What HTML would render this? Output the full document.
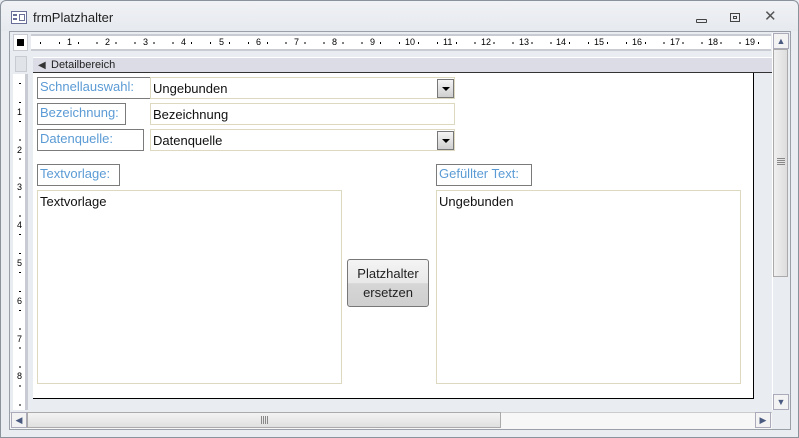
<!DOCTYPE html>
<html><head><meta charset="utf-8"><style>
*{margin:0;padding:0;box-sizing:border-box}
body{width:799px;height:438px;background:#e9ecf1;font-family:"Liberation Sans",sans-serif;position:relative;overflow:hidden}
.a{position:absolute}
.win{left:0;top:0;width:799px;height:438px;border:1px solid #8a929c;border-radius:6px 6px 0 0;background:linear-gradient(#f0f2f5,#e6e9ee 30px,#e9ecf1 30px)}
.lbl{border:1px solid #7b7b7b;color:#5b9bd5;font-size:13px;padding:1px 0 0 2px;background:#fff;height:22px}
.tb{border:1px solid #ddd8c0;background:#fff;font-size:13px;color:#111;padding:3px 0 0 2px}
.dd{width:17px;height:19px;right:0;top:1px;background:linear-gradient(#f4f4f4,#cfcfcf);border:1px solid #777}
.dd:after{content:"";position:absolute;left:4px;top:7px;border-left:4px solid transparent;border-right:4px solid transparent;border-top:4px solid #000}
.rn{font-size:9px;color:#000;top:37px}
.vn{font-size:9px;color:#000;left:17px}
</style></head><body>
<div class="a win"></div>
<!-- title -->
<div class="a" style="left:11px;top:11px;width:16px;height:13px;border:1px solid #6a6f9a;background:#fff"></div>
<div class="a" style="left:13px;top:14px;width:4px;height:2px;background:#6a6f9a"></div>
<div class="a" style="left:13px;top:18px;width:4px;height:2px;background:#6a6f9a"></div>
<div class="a" style="left:19px;top:14px;width:6px;height:7px;border:1px solid #6a6f9a"></div>
<div class="a" style="left:33px;top:10px;font-size:13px;color:#222">frmPlatzhalter</div>
<div class="a" style="left:696px;top:19px;width:11px;height:4px;border:1px solid #444;border-radius:1px"></div>
<div class="a" style="left:730px;top:13px;width:10px;height:9px;border:1px solid #444"><div class="a" style="left:2px;top:2px;width:4px;height:3px;border:1px solid #444"></div></div>
<div class="a" style="left:764px;top:7px;font-size:15px;color:#555">✕</div>
<!-- inner frame -->
<div class="a" style="left:9px;top:31px;width:782px;height:399px;border:1px solid #9aa0a8;background:#e9ecf1"></div>
<!-- ruler -->
<div class="a" style="left:13px;top:34px;width:15px;height:17px;background:#fff;border:1px solid #c8ccd2"></div>
<div class="a" style="left:17px;top:39px;width:7px;height:7px;background:#000"></div>
<div class="a" style="left:31px;top:34px;width:740px;height:17px;background:#fff;border-top:2px solid #c8ccd2;border-bottom:2px solid #c8ccd2;background-image:repeating-linear-gradient(90deg,transparent 0 9px,#000 9px 10px,transparent 10px 18.9px);background-size:100% 2px;background-position:0 6px;background-repeat:no-repeat"></div>
<div class="a rn" style="left:67px">1</div><div class="a rn" style="left:105px">2</div><div class="a rn" style="left:143px">3</div><div class="a rn" style="left:181px">4</div><div class="a rn" style="left:219px">5</div><div class="a rn" style="left:256px">6</div><div class="a rn" style="left:294px">7</div><div class="a rn" style="left:332px">8</div><div class="a rn" style="left:370px">9</div><div class="a rn" style="left:405px">10</div><div class="a rn" style="left:443px">11</div><div class="a rn" style="left:481px">12</div><div class="a rn" style="left:519px">13</div><div class="a rn" style="left:556px">14</div><div class="a rn" style="left:594px">15</div><div class="a rn" style="left:632px">16</div><div class="a rn" style="left:670px">17</div><div class="a rn" style="left:708px">18</div><div class="a rn" style="left:745px">19</div>
<!-- vertical ruler -->
<div class="a" style="left:15px;top:56px;width:12px;height:16px;background:#e0e3e8;border:1px solid #c8ccd2"></div>
<div class="a" style="left:13px;top:74px;width:15px;height:336px;background:#fff;border-right:3px solid #c8ccd2;background-image:repeating-linear-gradient(180deg,transparent 0 9px,#000 9px 10px,transparent 10px 18.9px);background-size:2px 100%;background-position:6px 0;background-repeat:no-repeat"></div>
<div class="a vn" style="top:107px">1</div><div class="a vn" style="top:145px">2</div><div class="a vn" style="top:182px">3</div><div class="a vn" style="top:220px">4</div><div class="a vn" style="top:258px">5</div><div class="a vn" style="top:296px">6</div><div class="a vn" style="top:334px">7</div><div class="a vn" style="top:371px">8</div>
<!-- detail header -->
<div class="a" style="left:33px;top:57px;width:739px;height:16px;background:#dcdce6;border-top:1px solid #fff;border-bottom:1px solid #333;font-size:11px;color:#222;padding:1px 0 0 18px">Detailbereich</div>
<div class="a" style="left:38px;top:60px;font-size:10px;color:#333">◀</div>
<!-- form area -->
<div class="a" style="left:33px;top:73px;width:721px;height:326px;background:#fff;border-right:1px solid #000;border-bottom:1px solid #000"></div>
<div class="a lbl" style="left:37px;top:77px;width:114px">Schnellauswahl:</div>
<div class="a tb" style="left:150px;top:77px;width:305px;height:22px">Ungebunden<div class="a dd"></div></div>
<div class="a lbl" style="left:37px;top:103px;width:89px">Bezeichnung:</div>
<div class="a tb" style="left:150px;top:103px;width:305px;height:22px">Bezeichnung</div>
<div class="a lbl" style="left:37px;top:129px;width:107px">Datenquelle:</div>
<div class="a tb" style="left:150px;top:129px;width:305px;height:22px">Datenquelle<div class="a dd"></div></div>
<div class="a lbl" style="left:37px;top:164px;width:83px">Textvorlage:</div>
<div class="a tb" style="left:37px;top:190px;width:305px;height:194px">Textvorlage</div>
<div class="a lbl" style="left:436px;top:164px;width:96px">Gefüllter Text:</div>
<div class="a tb" style="left:436px;top:190px;width:305px;height:194px">Ungebunden</div>
<div class="a" style="left:347px;top:259px;width:82px;height:48px;border:1px solid #777;border-radius:3px;background:linear-gradient(#f4f4f4 0,#e8e8e8 50%,#d6d6d6 51%,#cfcfcf);font-size:13px;color:#222;text-align:center;line-height:19px;padding-top:4px">Platzhalter<br>ersetzen</div>
<!-- v scrollbar -->
<div class="a" style="left:772px;top:33px;width:18px;height:377px;background:#e9ecf1;border-left:1px solid #fff"></div>
<div class="a" style="left:773px;top:33px;width:16px;height:16px;border:1px solid #aab;background:#f3f3f3;font-size:9px;color:#4a5a80;text-align:center;line-height:14px">▲</div>
<div class="a" style="left:773px;top:49px;width:15px;height:228px;border:1px solid #aaa;background:linear-gradient(90deg,#f0f0f0,#ddd)"></div>
<div class="a" style="left:777px;top:158px;width:8px;height:8px;background:repeating-linear-gradient(#888 0 1px,transparent 1px 2px)"></div>
<div class="a" style="left:773px;top:394px;width:16px;height:16px;border:1px solid #aab;background:#f3f3f3;font-size:9px;color:#4a5a80;text-align:center;line-height:14px">▼</div>
<!-- h scrollbar -->
<div class="a" style="left:10px;top:412px;width:762px;height:17px;background:#f7f7f7;border-top:1px solid #ccc"></div>
<div class="a" style="left:11px;top:412px;width:16px;height:16px;border:1px solid #aab;background:#f3f3f3;font-size:9px;color:#4a5a80;text-align:center;line-height:14px">◀</div>
<div class="a" style="left:27px;top:412px;width:474px;height:16px;border:1px solid #aaa;background:linear-gradient(#f3f3f3,#e0e0e0)"></div>
<div class="a" style="left:261px;top:416px;width:7px;height:8px;background:repeating-linear-gradient(90deg,#888 0 1px,transparent 1px 2px)"></div>
<div class="a" style="left:755px;top:412px;width:16px;height:16px;border:1px solid #aab;background:#f3f3f3;font-size:9px;color:#4a5a80;text-align:center;line-height:14px">▶</div>
</body></html>
